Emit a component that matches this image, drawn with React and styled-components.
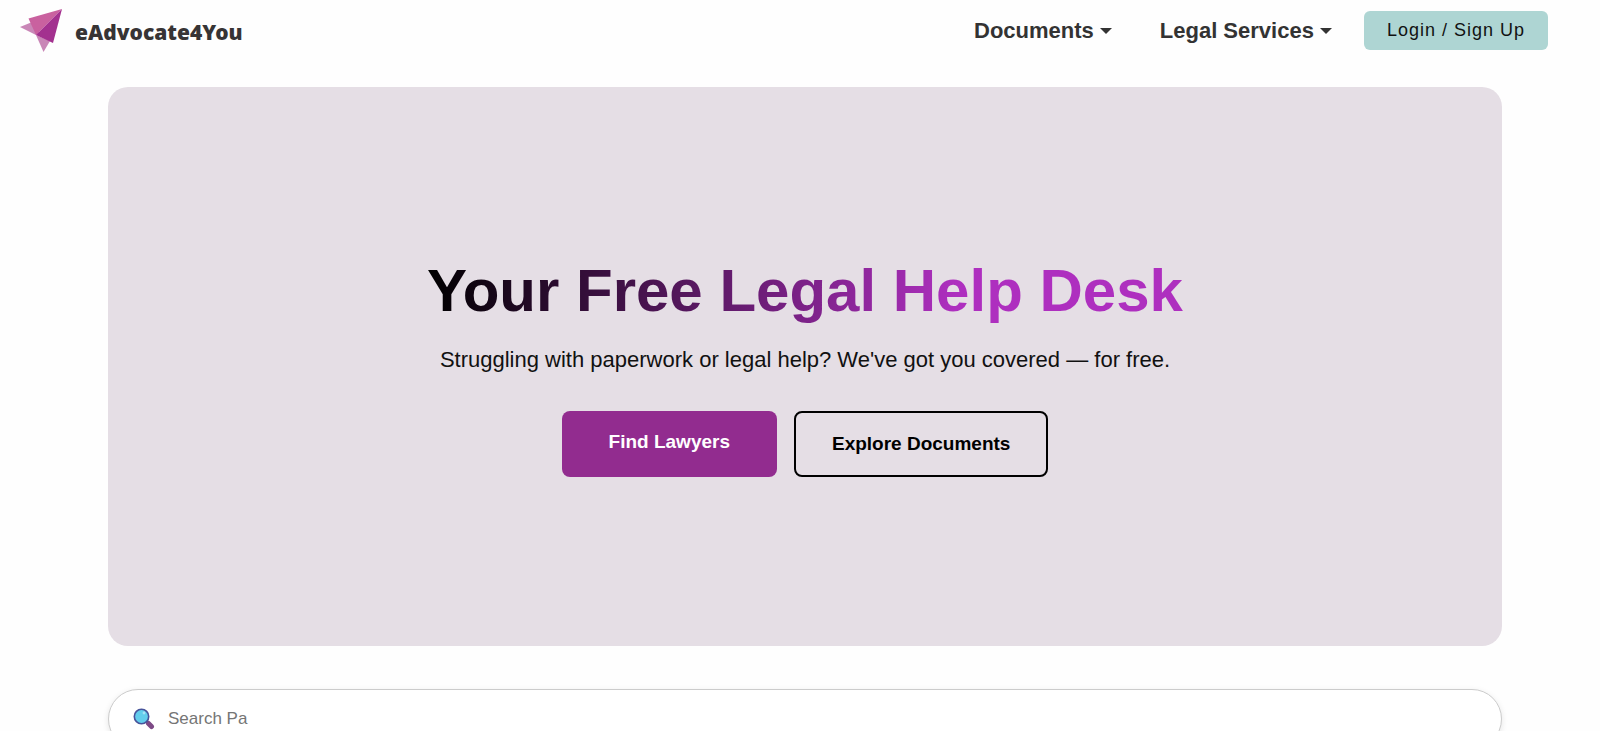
import React from "react";
import styled, { createGlobalStyle } from "styled-components";

const GlobalStyle = createGlobalStyle`
  * {
    box-sizing: border-box;
  }

  body {
    margin: 0;
    background: #fefefe;
    font-family: "Liberation Sans", Arial, sans-serif;
  }
`;

const Navbar = styled.header`
  display: flex;
  align-items: center;
  justify-content: space-between;
  height: 61px;
  padding: 0 52px 0 20px;
`;

const Brand = styled.a`
  display: flex;
  align-items: center;
  gap: 12px;
  color: #373435;
  font-family: "Noto Sans", sans-serif;
  font-size: 21px;
  font-weight: 900;
  line-height: 26px;
  text-decoration: none;
`;

const BrandName = styled.span`
  padding-top: 2px;
`;

const Menu = styled.nav`
  display: flex;
  align-items: center;
`;

const MenuButton = styled.button`
  display: flex;
  align-items: center;
  gap: 6px;
  margin-right: ${({ $last }) => ($last ? "32px" : "48px")};
  padding: 0;
  border: 0;
  background: none;
  color: #333;
  font-family: inherit;
  font-size: 22px;
  font-weight: bold;
  line-height: 26px;
  cursor: pointer;

  &::after {
    content: "";
    border-top: 6px solid;
    border-right: 6px solid transparent;
    border-left: 6px solid transparent;
  }
`;

const LoginButton = styled.button`
  height: 39px;
  padding: 0 23px;
  border: 0;
  border-radius: 6px;
  background: #aed5d3;
  color: #111;
  font-family: inherit;
  font-size: 18px;
  letter-spacing: 1px;
  cursor: pointer;
`;

const Page = styled.main`
  display: flex;
  flex-direction: column;
  gap: 43px;
  padding: 26px 98px 24px 108px;
`;

const Hero = styled.section`
  display: flex;
  flex-direction: column;
  align-items: center;
  padding: 168px 24px 169px;
  border-radius: 20px;
  background: #e5dee5;
  text-align: center;
`;

const Title = styled.h1`
  margin: 0 0 19px;
  background: linear-gradient(to right, #000, #ae2fbf 70%);
  background-clip: text;
  color: transparent;
  font-size: 60px;
  line-height: 72px;
`;

const Subtitle = styled.p`
  margin: 0 0 37px;
  color: #111;
  font-size: 22px;
  line-height: 28px;
`;

const Actions = styled.div`
  display: flex;
  gap: 17px;
`;

const ActionLink = styled.a`
  padding: 20px ${({ $outline }) => ($outline ? "36px" : "47px")};
  border: ${({ $outline }) => ($outline ? "2px solid #000" : "0")};
  border-radius: 8px;
  background: ${({ $outline }) => ($outline ? "transparent" : "#922c8f")};
  color: ${({ $outline }) => ($outline ? "#000" : "#fff")};
  font-size: 19px;
  font-weight: bold;
  line-height: 22px;
  text-decoration: none;
`;

const SearchBar = styled.label`
  display: flex;
  align-items: center;
  gap: 13px;
  height: 60px;
  padding: 0 24px;
  border: 1px solid #ccc;
  border-radius: 30px;
  background: #fff;
  box-shadow: 0 2px 6px rgba(0, 0, 0, 0.1);
`;

const SearchInput = styled.input`
  flex: 1;
  padding: 0;
  border: 0;
  outline: 0;
  background: none;
  font-family: inherit;
  font-size: 17px;

  &::placeholder {
    color: #757575;
  }
`;

function Logo() {
  return (
    <svg width="43" height="43" viewBox="0 0 43 43" aria-hidden="true">
      <path d="M0 18 L11 13.500 L20 25 L16 26 Z" fill="#c987b7" />
      <path d="M16 26 L30 32 L23.500 43 Z" fill="#c987b7" />
      <path d="M8.500 9.500 L42 0 L16 26 Z" fill="#c9619f" />
      <path d="M42 0 L33 34 L16 26 Z" fill="#a3318f" />
    </svg>
  );
}

function SearchIcon() {
  return (
    <svg width="22" height="22" viewBox="0 0 22 22" aria-hidden="true">
      <path d="M13 13 L15 15" stroke="#3f3f7a" strokeWidth="2" />
      <path d="M15.500 15.500 L18.500 18.500" stroke="#7d4a86" strokeWidth="5" strokeLinecap="round" />
      <circle cx="8.500" cy="8.500" r="7.200" fill="#62cdec" stroke="#47539a" strokeWidth="1.600" />
      <circle cx="11" cy="5" r="1.400" fill="#a5e4f6" />
    </svg>
  );
}

export default function App() {
  return (
    <>
      <GlobalStyle />
      <Navbar>
        <Brand href="#">
          <Logo />
          <BrandName>eAdvocate4You</BrandName>
        </Brand>
        <Menu>
          <MenuButton>Documents</MenuButton>
          <MenuButton $last>Legal Services</MenuButton>
          <LoginButton>Login / Sign Up</LoginButton>
        </Menu>
      </Navbar>
      <Page>
        <Hero>
          <Title>Your Free Legal Help Desk</Title>
          <Subtitle>
            Struggling with paperwork or legal help? We've got you covered — for free.
          </Subtitle>
          <Actions>
            <ActionLink href="#">Find Lawyers</ActionLink>
            <ActionLink href="#" $outline>
              Explore Documents
            </ActionLink>
          </Actions>
        </Hero>
        <SearchBar>
          <SearchIcon />
          <SearchInput type="text" placeholder="Search Pa" aria-label="Search" />
        </SearchBar>
      </Page>
    </>
  );
}
